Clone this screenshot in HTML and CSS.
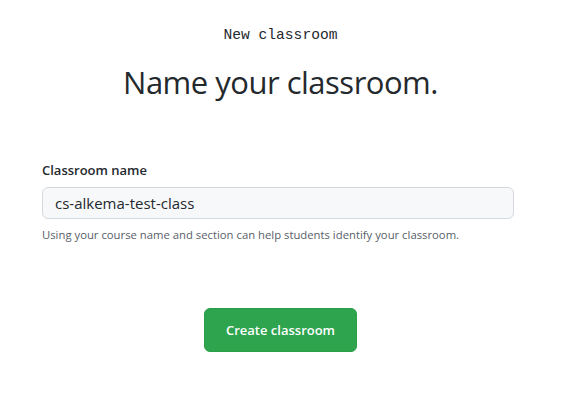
FILE: index.html
```html
<!DOCTYPE html>
<html>
<head>
<meta charset="utf-8">
<link rel="stylesheet" href="styles.css">
</head>
<body>
<main class="page">
  <div class="eyebrow">New classroom</div>
  <h1 class="title">Name your classroom.</h1>
  <form class="form">
    <label class="label" for="name">Classroom name</label>
    <input class="input" id="name" type="text" value="cs-alkema-test-class">
    <p class="note">Using your course name and section can help students identify your classroom.</p>
    <div class="actions">
      <button class="btn" type="button">Create classroom</button>
    </div>
  </form>
</main>
</body>
</html>
```
FILE: styles.css
```css
html, body {
  margin: 0;
  padding: 0;
  background: #fff;
}
body {
  font-family: "Open Sans", "Noto Sans", sans-serif;
  color: #24292e;
}
.page {
  width: 472px;
  margin-left: 42px;
  padding-top: 26px;
  display: flex;
  flex-direction: column;
  align-items: center;
}
.eyebrow {
  font-family: "Liberation Mono", monospace;
  font-size: 14.6px;
  line-height: 18px;
  color: #24292e;
  margin-left: 5px;
}
.title {
  margin: 18px 0 0 5px;
  font-weight: 400;
  font-size: 31px;
  line-height: 40px;
  letter-spacing: -0.5px;
}
.form {
  align-self: stretch;
  display: flex;
  flex-direction: column;
  margin-top: 58px;
}
.label {
  font-size: 13px;
  font-weight: 600;
  line-height: 20px;
  margin-bottom: 7px;
}
.input {
  box-sizing: border-box;
  height: 32px;
  width: 472px;
  padding: 0 12px;
  border: 1px solid #d5d9de;
  border-radius: 6px;
  background: #f6f8fa;
  font-family: inherit;
  font-size: 15px;
  color: #24292e;
  outline: none;
}
.note {
  margin: 8px 0 0;
  font-size: 11.3px;
  line-height: 16px;
  color: #586069;
}
.actions {
  display: flex;
  justify-content: center;
  margin-top: 65px;
  padding-left: 5px;
}
.btn {
  width: 153px;
  height: 44px;
  border: 1px solid #28a046;
  border-radius: 6px;
  background: #2ea44f;
  color: #fff;
  font-family: inherit;
  font-size: 13px;
  font-weight: 600;
  cursor: pointer;
}
```
